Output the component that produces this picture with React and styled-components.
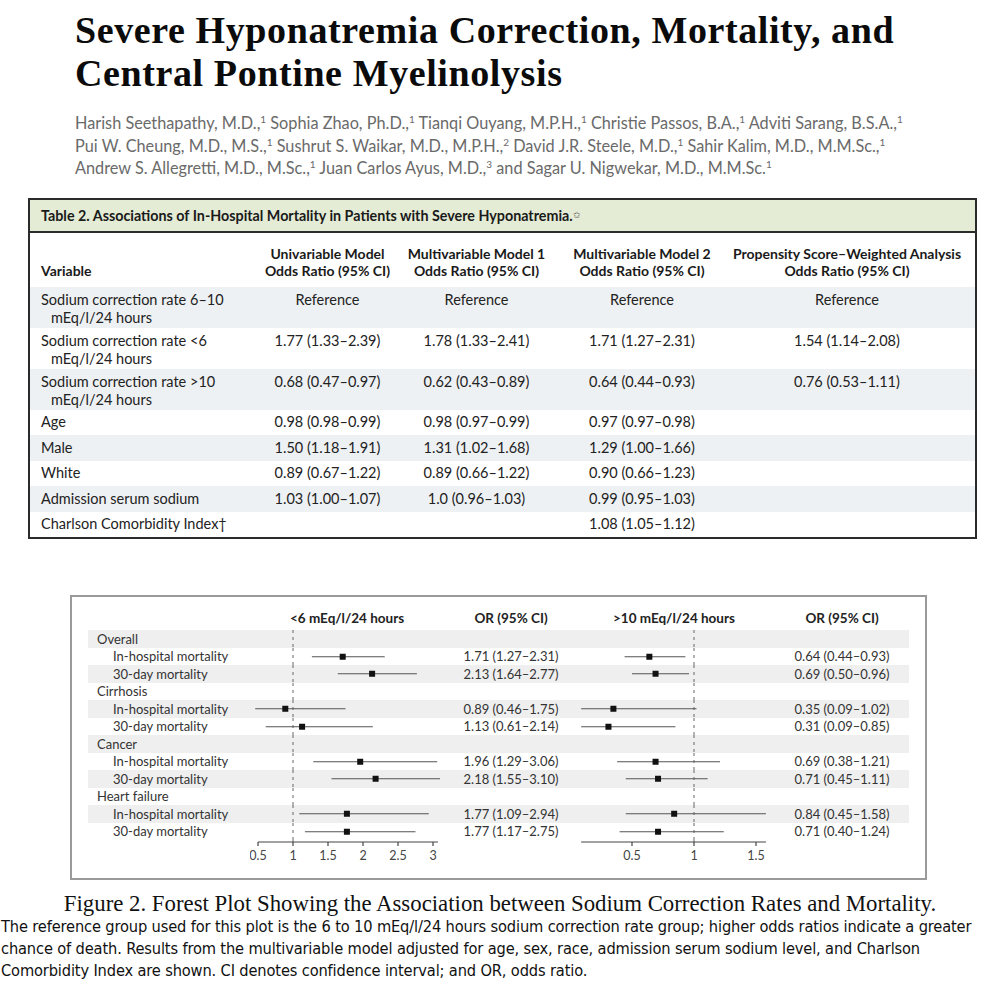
import React from 'react';
import styled, { createGlobalStyle } from 'styled-components';

const GlobalStyle = createGlobalStyle`
  body {
    margin: 0;
    background: #ffffff;
  }
`;

const sans = `"Lato", "Open Sans", "Liberation Sans", sans-serif`;

const Page = styled.div`
  width: 1000px;
  height: 1000px;
  overflow: hidden;
  background: #fff;
  color: #111;
  font-family: ${sans};
`;

const Title = styled.h1`
  margin: 9px 0 0 75px;
  font-family: "Liberation Serif", serif;
  font-weight: 700;
  font-size: 38px;
  letter-spacing: 0.6px;
  line-height: 43px;
  color: #0b0b0b;
`;

const Authors = styled.p`
  margin: 17px 0 0 75px;
  width: 900px;
  font-size: 16.3px;
  line-height: 22.5px;
  color: #6a6a6a;
  sup {
    font-size: 10px;
    line-height: 0;
    vertical-align: 6px;
  }
`;

const TableBox = styled.div`
  margin: 18px 23px 0 28px;
  border: 2px solid #2b2b2b;
`;

const TableTitle = styled.div`
  height: 31px;
  padding-left: 11px;
  display: flex;
  align-items: center;
  background: #e4ecd6;
  border-bottom: 2px solid #2b2b2b;
  font-weight: 700;
  font-size: 14.3px;
  color: #1a1a1a;
  sup {
    font-size: 9px;
    font-weight: 400;
    vertical-align: 5px;
    line-height: 0;
    color: #555;
  }
`;

const TRow = styled.div`
  display: grid;
  grid-template-columns: 225px 145px 153px 178px 232px;
  background: ${(p) => (p.$shade ? '#eef1f3' : '#fff')};
  padding: ${(p) => (p.$tall ? '4px 0 1px' : '3.75px 0')};
  font-size: 14.5px;
  line-height: 18px;
  color: #222;
`;

const HeadRow = styled(TRow)`
  padding: 12px 0 8px;
  font-weight: 700;
  font-size: 14px;
  line-height: 17px;
  color: #1a1a1a;
`;

const VarCell = styled.div`
  padding-left: 21px;
  text-indent: -10px;
  align-self: ${(p) => (p.$bottom ? 'end' : 'start')};
`;

const ValCell = styled.div`
  text-align: center;
  align-self: ${(p) => (p.$bottom ? 'end' : 'start')};
`;

const tableRows = [
  { v: ['Sodium correction rate 6–10', 'mEq/l/24 hours'], c: ['Reference', 'Reference', 'Reference', 'Reference'] },
  { v: ['Sodium correction rate <6', 'mEq/l/24 hours'], c: ['1.77 (1.33–2.39)', '1.78 (1.33–2.41)', '1.71 (1.27–2.31)', '1.54 (1.14–2.08)'] },
  { v: ['Sodium correction rate >10', 'mEq/l/24 hours'], c: ['0.68 (0.47–0.97)', '0.62 (0.43–0.89)', '0.64 (0.44–0.93)', '0.76 (0.53–1.11)'] },
  { v: ['Age'], c: ['0.98 (0.98–0.99)', '0.98 (0.97–0.99)', '0.97 (0.97–0.98)', ''] },
  { v: ['Male'], c: ['1.50 (1.18–1.91)', '1.31 (1.02–1.68)', '1.29 (1.00–1.66)', ''] },
  { v: ['White'], c: ['0.89 (0.67–1.22)', '0.89 (0.66–1.22)', '0.90 (0.66–1.23)', ''] },
  { v: ['Admission serum sodium'], c: ['1.03 (1.00–1.07)', '1.0 (0.96–1.03)', '0.99 (0.95–1.03)', ''] },
  { v: ['Charlson Comorbidity Index†'], c: ['', '', '1.08 (1.05–1.12)', ''] },
];

// forest plot

const Figure = styled.div`
  margin: 56px 73px 0 70px;
  border: 2px solid #9a9a9a;
  padding: 9px 16px 8px 16px;
`;

const FRow = styled.div`
  display: grid;
  grid-template-columns: 162px 195px 132px 198px 134px;
  height: ${(p) => p.$h || 17.5}px;
  align-items: center;
  background: ${(p) => (p.$shade ? '#efefef' : 'transparent')};
  font-size: 13px;
  color: #333;
`;

const FHead = styled.div`
  font-weight: 700;
  font-size: 13.5px;
  color: #222;
  padding-left: ${(p) => p.$pad || 0}px;
  text-align: ${(p) => (p.$center ? 'center' : 'left')};
`;

const FLabel = styled.div`
  padding-left: ${(p) => (p.$sub ? 25 : 9)}px;
  white-space: nowrap;
`;

const FValue = styled.div`
  text-align: center;
`;

const LEFT = { w: 195, one: 43, k: 70 };
const RIGHT = { w: 198, one: 117, k: 124 };

const px = (s, v) => s.one + (v - 1) * s.k;

const PlotCell = ({ s, d, h = 17.5 }) => (
  <svg width={s.w} height={h} style={{ display: 'block' }}>
    <line x1={s.one} x2={s.one} y1={0} y2={h} stroke="#666" strokeWidth="1" strokeDasharray="3 4" />
    {d && (
      <>
        <line x1={px(s, d[1])} x2={px(s, d[2])} y1={h / 2} y2={h / 2} stroke="#555" strokeWidth="1.2" />
        <rect x={px(s, d[0]) - 3} y={h / 2 - 3} width="6" height="6" fill="#111" />
      </>
    )}
  </svg>
);

const Axis = ({ s, from, to, ticks }) => (
  <svg width={s.w} height={30} style={{ display: 'block' }}>
    <line x1={s.one} x2={s.one} y1={0} y2={2} stroke="#666" strokeDasharray="3 4" />
    <line x1={px(s, from)} x2={px(s, to)} y1={2} y2={2} stroke="#444" strokeWidth="1.2" />
    {ticks.map((t) => (
      <g key={t}>
        <line x1={px(s, t)} x2={px(s, t)} y1={2} y2={6} stroke="#444" strokeWidth="1.2" />
        <text x={px(s, t)} y={20} textAnchor="middle" fontSize="12.5" fill="#444" fontFamily={sans}>
          {t}
        </text>
      </g>
    ))}
  </svg>
);

const fmt = (d) => `${d[0].toFixed(2)} (${d[1].toFixed(2)}–${d[2].toFixed(2)})`;

const groups = [
  {
    name: 'Overall',
    rows: [
      { l: [1.71, 1.27, 2.31], r: [0.64, 0.44, 0.93] },
      { l: [2.13, 1.64, 2.77], r: [0.69, 0.5, 0.96] },
    ],
  },
  {
    name: 'Cirrhosis',
    rows: [
      { l: [0.89, 0.46, 1.75], r: [0.35, 0.09, 1.02] },
      { l: [1.13, 0.61, 2.14], r: [0.31, 0.09, 0.85] },
    ],
  },
  {
    name: 'Cancer',
    rows: [
      { l: [1.96, 1.29, 3.06], r: [0.69, 0.38, 1.21] },
      { l: [2.18, 1.55, 3.1], r: [0.71, 0.45, 1.11] },
    ],
  },
  {
    name: 'Heart failure',
    rows: [
      { l: [1.77, 1.09, 2.94], r: [0.84, 0.45, 1.58] },
      { l: [1.77, 1.17, 2.75], r: [0.71, 0.4, 1.24] },
    ],
  },
];

const outcomes = ['In-hospital mortality', '30-day mortality'];

const forestRows = groups.flatMap((g) => [
  { label: g.name },
  ...g.rows.map((r, i) => ({ label: outcomes[i], sub: true, ...r })),
]);

const CaptionTitle = styled.div`
  margin-top: 11px;
  text-align: center;
  font-family: "Liberation Serif", serif;
  font-size: 22.8px;
  line-height: 26px;
  color: #111;
`;

const CaptionText = styled.p`
  margin: -1px 0 0;
  padding-left: 1px;
  font-family: "Liberation Sans Narrow", "DejaVu Sans Condensed", "Liberation Sans", sans-serif;
  font-size: 16.3px;
  letter-spacing: -0.15px;
  line-height: 22px;
  color: #111;
`;

export default function App() {
  return (
    <Page>
      <GlobalStyle />
      <Title>
        Severe Hyponatremia Correction, Mortality, and
        <br />
        Central Pontine Myelinolysis
      </Title>
      <Authors>
        Harish Seethapathy, M.D.,<sup>1</sup> Sophia Zhao, Ph.D.,<sup>1</sup> Tianqi Ouyang, M.P.H.,<sup>1</sup> Christie
        Passos, B.A.,<sup>1</sup> Adviti Sarang, B.S.A.,<sup>1</sup>
        <br />
        Pui W. Cheung, M.D., M.S.,<sup>1</sup> Sushrut S. Waikar, M.D., M.P.H.,<sup>2</sup> David J.R. Steele, M.D.,
        <sup>1</sup> Sahir Kalim, M.D., M.M.Sc.,<sup>1</sup>
        <br />
        Andrew S. Allegretti, M.D., M.Sc.,<sup>1</sup> Juan Carlos Ayus, M.D.,<sup>3</sup> and Sagar U. Nigwekar, M.D.,
        M.M.Sc.<sup>1</sup>
      </Authors>

      <TableBox>
        <TableTitle>
          Table 2. Associations of In-Hospital Mortality in Patients with Severe Hyponatremia.<sup>✩</sup>
        </TableTitle>
        <HeadRow>
          <VarCell $bottom>Variable</VarCell>
          <ValCell $bottom>
            Univariable Model
            <br />
            Odds Ratio (95% CI)
          </ValCell>
          <ValCell $bottom>
            Multivariable Model 1
            <br />
            Odds Ratio (95% CI)
          </ValCell>
          <ValCell $bottom>
            Multivariable Model 2
            <br />
            Odds Ratio (95% CI)
          </ValCell>
          <ValCell $bottom>
            Propensity Score–Weighted Analysis
            <br />
            Odds Ratio (95% CI)
          </ValCell>
        </HeadRow>
        {tableRows.map((r, i) => (
          <TRow key={i} $shade={i % 2 === 0} $tall={r.v.length > 1}>
            <VarCell>
              {r.v[0]}
              {r.v[1] && (
                <>
                  <br />
                  {r.v[1]}
                </>
              )}
            </VarCell>
            {r.c.map((c, j) => (
              <ValCell key={j}>{c}</ValCell>
            ))}
          </TRow>
        ))}
      </TableBox>

      <Figure>
        <FRow $h={24}>
          <div />
          <FHead $pad={40}>&lt;6 mEq/l/24 hours</FHead>
          <FHead $center>OR (95% CI)</FHead>
          <FHead $pad={36}>&gt;10 mEq/l/24 hours</FHead>
          <FHead $center>OR (95% CI)</FHead>
        </FRow>
        {forestRows.map((r, i) => (
          <FRow key={i} $shade={i % 2 === 0}>
            <FLabel $sub={r.sub}>{r.label}</FLabel>
            <PlotCell s={LEFT} d={r.l} />
            <FValue>{r.l ? fmt(r.l) : ''}</FValue>
            <PlotCell s={RIGHT} d={r.r} />
            <FValue>{r.r ? fmt(r.r) : ''}</FValue>
          </FRow>
        ))}
        <FRow $h={30}>
          <div />
          <Axis s={LEFT} from={0.5} to={3.07} ticks={[0.5, 1, 1.5, 2, 2.5, 3]} />
          <div />
          <Axis s={RIGHT} from={0.09} to={1.58} ticks={[0.5, 1, 1.5]} />
          <div />
        </FRow>
      </Figure>

      <CaptionTitle>Figure 2. Forest Plot Showing the Association between Sodium Correction Rates and Mortality.</CaptionTitle>
      <CaptionText>
        The reference group used for this plot is the 6 to 10 mEq/l/24 hours sodium correction rate group; higher odds
        ratios indicate a greater chance of death. Results from the multivariable model adjusted for age, sex, race,
        admission serum sodium level, and Charlson Comorbidity Index are shown. CI denotes confidence interval; and OR,
        odds ratio.
      </CaptionText>
    </Page>
  );
}
